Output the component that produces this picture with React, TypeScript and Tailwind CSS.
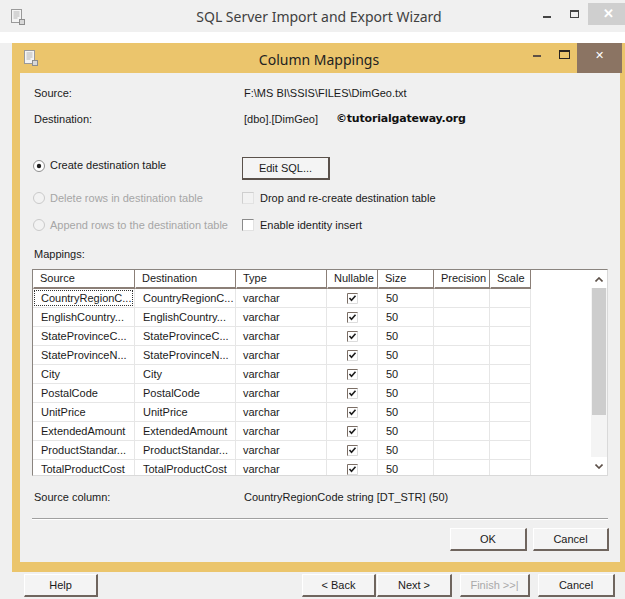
import React from 'react';

const rows: [string, string][] = [
  ['CountryRegionC...', 'CountryRegionC...'],
  ['EnglishCountry...', 'EnglishCountry...'],
  ['StateProvinceC...', 'StateProvinceC...'],
  ['StateProvinceN...', 'StateProvinceN...'],
  ['City', 'City'],
  ['PostalCode', 'PostalCode'],
  ['UnitPrice', 'UnitPrice'],
  ['ExtendedAmount', 'ExtendedAmount'],
  ['ProductStandar...', 'ProductStandar...'],
  ['TotalProductCost', 'TotalProductCost'],
];

const cols = [
  { name: 'Source', w: 'w-[102px]' },
  { name: 'Destination', w: 'w-[101px]' },
  { name: 'Type', w: 'w-[91px]' },
  { name: 'Nullable', w: 'w-[51px]' },
  { name: 'Size', w: 'w-[56px]' },
  { name: 'Precision', w: 'w-[56px]' },
  { name: 'Scale', w: 'w-[41px]' },
];

function WinIcon() {
  return (
    <svg width="16" height="16" viewBox="0 0 16 16">
      <rect x="1.5" y="0.5" width="10" height="13" fill="#f4f4f4" stroke="#9a9a9a" />
      <path d="M3.5 3h6M3.5 5h6M3.5 7h6M3.5 9h4" stroke="#b5b5b5" />
      <rect x="9" y="10" width="6" height="6" fill="#8d8d8d" />
      <rect x="10" y="11" width="4" height="4" fill="#d8d8d8" />
    </svg>
  );
}

function Radio({ checked, disabled }: { checked?: boolean; disabled?: boolean }) {
  return (
    <svg width="12" height="12" viewBox="0 0 12 12" className="shrink-0">
      <circle cx="6" cy="6" r="5.5" fill={disabled ? '#f2f2f2' : '#fff'} stroke={disabled ? '#c9c9c9' : '#8e8e8e'} />
      {checked && <circle cx="6" cy="6" r="2.2" fill="#1e1e1e" />}
    </svg>
  );
}

function Check({ disabled }: { disabled?: boolean }) {
  return (
    <div
      className={`w-[12px] h-[12px] shrink-0 border-t border-l ${
        disabled ? 'border-[#cfcfcf] bg-[#f2f2f2]' : 'border-[#8a8a8a] bg-white'
      } border-r border-b border-r-[#e2e2e2] border-b-[#e2e2e2]`}
    />
  );
}

function CellCheck() {
  return (
    <svg width="11" height="11" viewBox="0 0 11 11">
      <rect x="0" y="0" width="11" height="11" fill="#fff" />
      <path d="M0.5 11V0.5H11" fill="none" stroke="#7b6e65" />
      <path d="M10.5 0.5V10.5H0.5" fill="none" stroke="#dcdcdc" />
      <path d="M2.5 5l2 2.2 4-4.4" fill="none" stroke="#1d1d1d" strokeWidth="1.6" />
    </svg>
  );
}

function Btn({ label, w, disabled }: { label: string; w: string; disabled?: boolean }) {
  return (
    <div
      className={`${w} h-[23px] flex items-center justify-center bg-[#f4f4f4] border-t border-l border-white border-r-2 border-b-2 border-r-[#6f655e] border-b-[#6f655e] ${
        disabled ? 'text-[#a9a9a9]' : 'text-[#1a1a1a]'
      }`}
    >
      {label}
    </div>
  );
}

export default function App() {
  return (
    <div className="relative w-[625px] h-[599px] overflow-hidden bg-[#f0f0f0] font-['Liberation_Sans',Arial,sans-serif] text-[11px] text-[#1a1a1a]">
      {/* Wizard window */}
      <div className="flex flex-col h-full">
        <div className="h-[32px] flex items-center relative bg-[#f0f0f0]">
          <div className="pl-[10px] pt-[2px]">
            <WinIcon />
          </div>
          <div className="absolute left-[0px] w-[638px] text-center font-['Noto_Sans',sans-serif] text-[14px] text-[#404040]">
            SQL Server Import and Export Wizard
          </div>
          <div className="absolute left-[543px] top-[16px] w-[8px] h-[2px] bg-[#444]" />
          <div className="absolute left-[570px] top-[10px] w-[9px] h-[8px] border border-t-2 border-[#444]" />
          <div className="absolute left-[588px] top-[3px] w-[40px] h-[22px] bg-[#cfcfcf] flex items-center justify-center text-white text-[13px] font-bold">
            ✕
          </div>
        </div>
        <div className="h-[11px] bg-white" />
        <div className="flex-1" />
        <div className="h-[27px] flex items-start pt-[2px] pl-[24px] gap-[1px]">
          <Btn label="Help" w="w-[74px]" />
          <div className="w-[202px]" />
          <Btn label="< Back" w="w-[74px]" />
          <Btn label="Next >" w="w-[75px]" />
          <div className="w-[6px]" />
          <Btn label="Finish >>|" w="w-[70px]" disabled />
          <div className="w-[6px]" />
          <Btn label="Cancel" w="w-[77px]" />
        </div>
      </div>

      {/* Column Mappings dialog */}
      <div className="absolute left-[12px] top-[43px] w-[616px] h-[529px] bg-[#ebc56c] flex flex-col">
        <div className="h-[30px] relative flex items-start">
          <div className="pl-[11px] pt-[7px]">
            <WinIcon />
          </div>
          <div className="absolute left-0 w-[614px] top-[6px] text-center font-['Noto_Sans',sans-serif] text-[14px] text-[#222]">
            Column Mappings
          </div>
          <div className="absolute left-[521px] top-[12px] w-[8px] h-[2px] bg-[#5e5045]" />
          <div className="absolute left-[547px] top-[7px] w-[11px] h-[9px] border border-t-2 border-[#2a241f]" />
          <div className="absolute left-[565px] top-0 w-[45px] h-[30px] bg-[#8b7463] flex justify-center pt-[4px] text-white text-[11px]">
            ✕
          </div>
        </div>
        <div className="flex-1 ml-[8px] mr-[8px] mb-[10px] bg-[#f0f0f0] flex flex-col pl-[12px] pr-[10px]">
          <div className="pt-[7px] pl-[2px]">
            <div className="h-[26px] flex items-center">
              <div className="w-[210px]">Source:</div>
              <div>F:\MS BI\SSIS\FILES\DimGeo.txt</div>
            </div>
            <div className="h-[26px] flex items-center">
              <div className="w-[210px]">Destination:</div>
              <div className="w-[92px]">[dbo].[DimGeo]</div>
              <div className="font-['DejaVu_Sans',sans-serif] font-bold text-[11px] text-[#111] tracking-[-0.2px]">
                ©tutorialgateway.org
              </div>
            </div>
          </div>

          <div className="mt-[25px] pl-[1px]">
            <div className="h-[23px] flex">
              <div className="w-[209px] flex items-center gap-[5px] self-start pt-[2px] h-[13px] box-content">
                <Radio checked />
                <span>Create destination table</span>
              </div>
              <div className="w-[88px] h-[23px] flex items-center justify-center bg-[#f4f4f4] border border-[#5a514b] border-r-2 border-b-2">
                Edit SQL...
              </div>
            </div>
            <div className="mt-[11px] h-[14px] flex items-center">
              <div className="w-[209px] flex items-center gap-[5px] text-[#a6a6a6]">
                <Radio disabled />
                <span>Delete rows in destination table</span>
              </div>
              <div className="flex items-center gap-[6px]">
                <Check disabled />
                <span>Drop and re-create destination table</span>
              </div>
            </div>
            <div className="mt-[13px] h-[14px] flex items-center">
              <div className="w-[209px] flex items-center gap-[5px] text-[#a6a6a6]">
                <Radio disabled />
                <span>Append rows to the destination table</span>
              </div>
              <div className="flex items-center gap-[6px]">
                <Check />
                <span>Enable identity insert</span>
              </div>
            </div>
          </div>

          <div className="mt-[15px] h-[14px] flex items-center pl-[2px]">Mappings:</div>

          {/* Grid */}
          <div className="mt-[8px] h-[207px] w-[576px] border border-[#8a847f] border-r-[#d9d9d9] border-b-[#d9d9d9] bg-white flex overflow-hidden">
            <div className="w-[498px] flex flex-col">
              <div className="h-[19px] flex shrink-0">
                {cols.map((c) => (
                  <div
                    key={c.name}
                    className={`${c.w} h-[19px] pl-[6px] flex items-center border-l border-l-white border-r border-r-[#8b7f77] border-b-2 border-b-[#8b7f77] bg-white`}
                  >
                    {c.name}
                  </div>
                ))}
              </div>
              {rows.map(([src, dst], i) => (
                <div key={i} className="h-[19px] flex shrink-0">
                  <div className="w-[102px] h-[19px] p-[1px] border-r border-b border-[#e6e6e6]">
                    <div
                      className={`h-full flex items-center pl-[7px] ${
                        i === 0 ? 'outline outline-1 outline-dotted outline-[#333] -outline-offset-1' : ''
                      }`}
                    >
                      {src}
                    </div>
                  </div>
                  <div className="w-[101px] h-[19px] pl-[8px] flex items-center border-r border-b border-[#e6e6e6]">{dst}</div>
                  <div className="w-[91px] h-[19px] pl-[7px] flex items-center border-r border-b border-[#e6e6e6]">varchar</div>
                  <div className="w-[51px] h-[19px] flex items-center justify-center border-r border-b border-[#e6e6e6]">
                    <CellCheck />
                  </div>
                  <div className="w-[56px] h-[19px] pl-[8px] flex items-center border-r border-b border-[#e6e6e6]">50</div>
                  <div className="w-[56px] h-[19px] border-r border-b border-[#e6e6e6]" />
                  <div className="w-[41px] h-[19px] border-r border-b border-[#e6e6e6]" />
                </div>
              ))}
            </div>
            <div className="w-[60px]" />
            {/* Scrollbar */}
            <div className="w-[16px] flex flex-col bg-[#f4f4f4]">
              <div className="h-[18px] bg-white flex items-center justify-center">
                <svg width="8" height="5" viewBox="0 0 8 5">
                  <path d="M0.5 4.5L4 1l3.5 3.5" fill="none" stroke="#5c5048" strokeWidth="1.6" />
                </svg>
              </div>
              <div className="h-[127px] bg-[#cdcdcd] mx-[1px]" />
              <div className="flex-1" />
              <div className="h-[18px] bg-white flex items-center justify-center">
                <svg width="8" height="5" viewBox="0 0 8 5">
                  <path d="M0.5 0.5L4 4l3.5-3.5" fill="none" stroke="#5c5048" strokeWidth="1.6" />
                </svg>
              </div>
            </div>
          </div>

          <div className="mt-[14px] h-[14px] flex items-center pl-[2px]">
            <div className="w-[210px]">Source column:</div>
            <div>CountryRegionCode string [DT_STR] (50)</div>
          </div>

          <div className="mt-[14px] h-[2px] w-[576px] border-t border-t-[#a0a0a0] border-b border-b-white" />

          <div className="mt-[8px] flex justify-end gap-[6px] pr-[1px]">
            <Btn label="OK" w="w-[77px]" />
            <Btn label="Cancel" w="w-[76px]" />
          </div>
        </div>
      </div>
    </div>
  );
}
